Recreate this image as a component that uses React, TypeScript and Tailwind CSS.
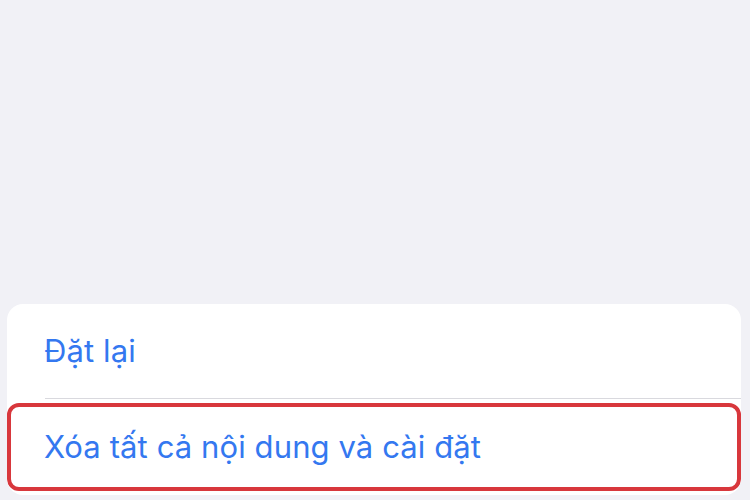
export default function App() {
  return (
    <div className="w-[750px] h-[500px] bg-[#f1f1f6] flex flex-col justify-end pb-[5px] pl-[7px] pr-[9px] font-['Inter','Noto_Sans',sans-serif]">
      <div className="bg-white rounded-[16px] overflow-hidden">
        {/* Reset row */}
        <div className="h-[94px] flex items-center pl-[37px] text-[31px] text-[#3478f0] tracking-[0.1px]">
          Đặt lại
        </div>
        <div className="ml-[38px] h-px bg-[#d9d9de]" />
        {/* Erase row, highlighted */}
        <div className="relative h-[96px] flex items-center pl-[37px] text-[31px] text-[#3478f0] tracking-[0.1px]">
          Xóa tất cả nội dung và cài đặt
          <div className="absolute inset-x-0 top-[4px] bottom-[4px] border-[4px] border-[#d8373c] rounded-[12px]" />
        </div>
      </div>
    </div>
  )
}
